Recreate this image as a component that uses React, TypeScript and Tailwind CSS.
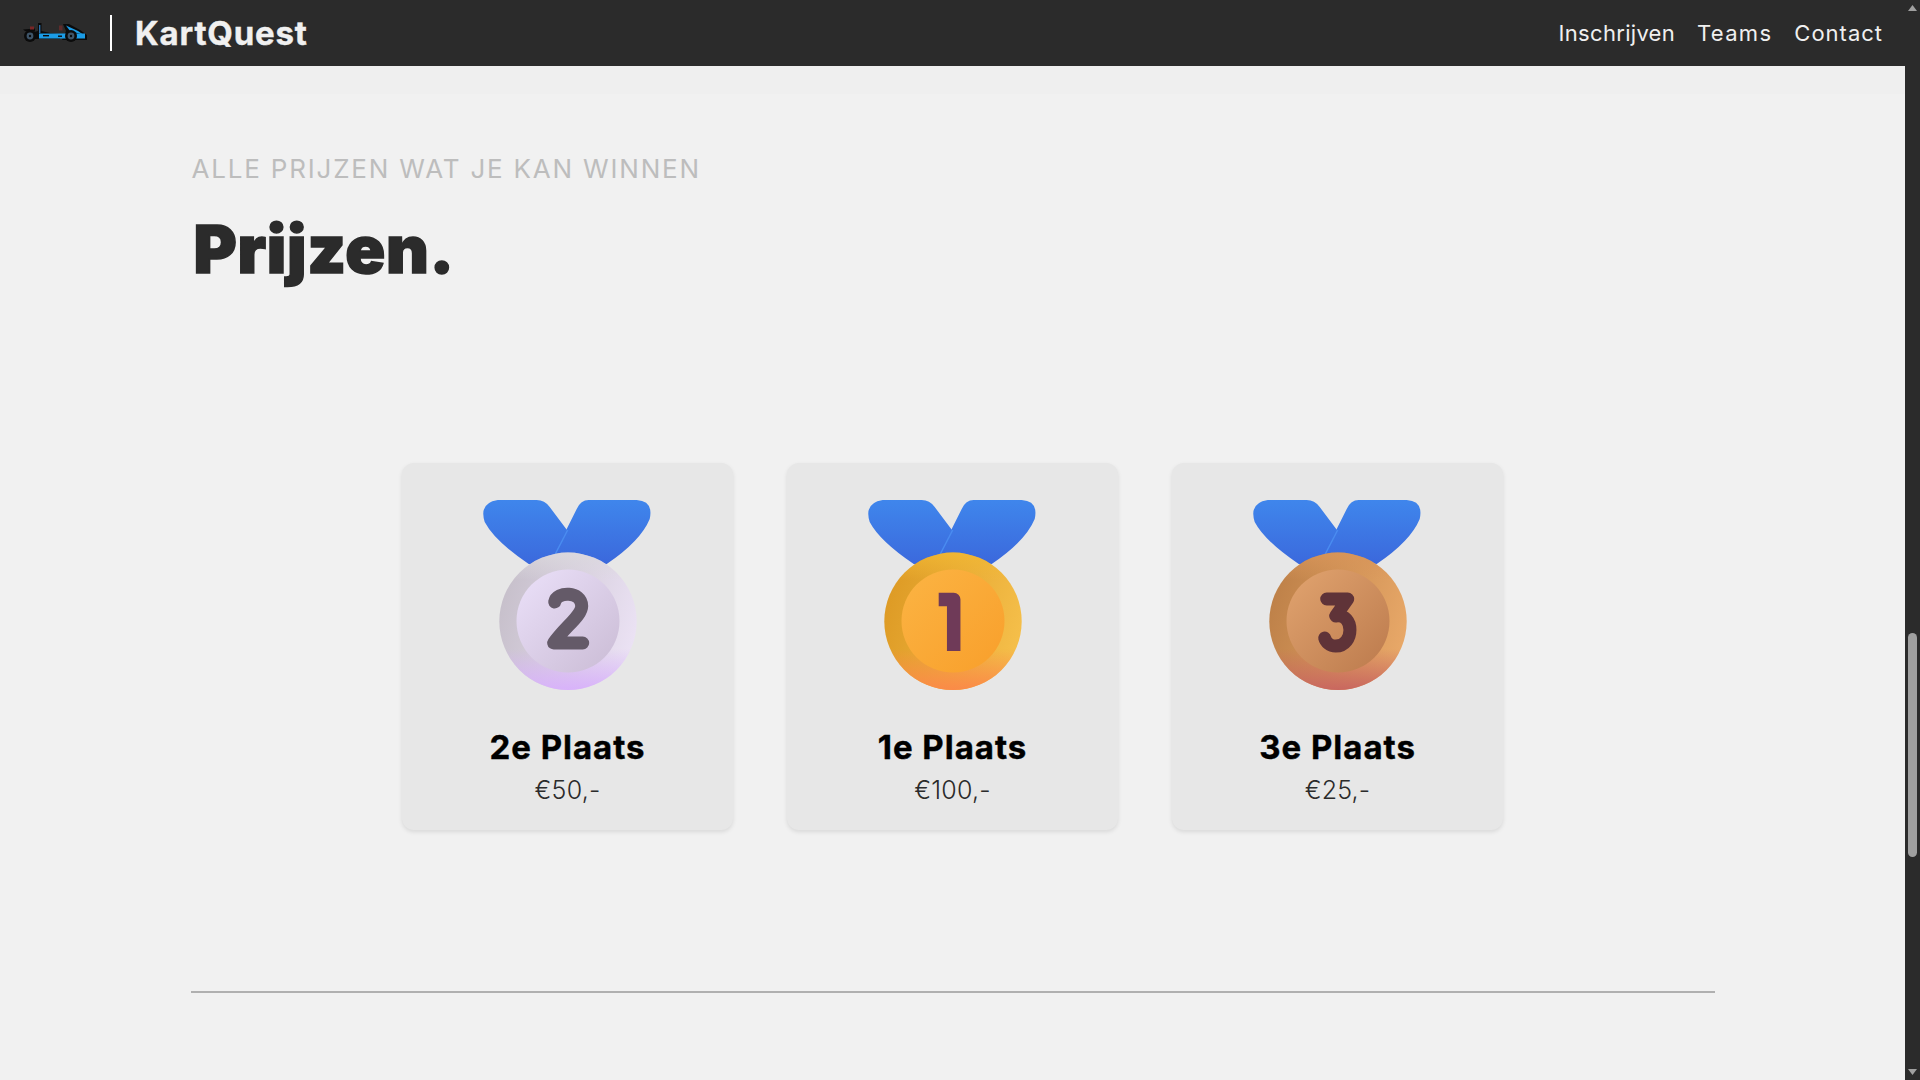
import React from "react";

type MedalProps = {
  id: string;
  rim: [string, string, string, string];
  face: [string, string];
  digit: string;
  digitColor: string;
  cap: "round" | "butt";
  width: number;
};

function Medal({ id, rim, face, digit, digitColor, cap, width }: MedalProps) {
  return (
    <svg viewBox="3.3 0 200 220" className="w-[200px] h-[220px] block" aria-hidden="true">
      <defs>
        <linearGradient id={`r-${id}`} x1="0" y1="0" x2="0" y2="1">
          <stop offset="0" stopColor="#3f86ec" />
          <stop offset="1" stopColor="#3b68dc" />
        </linearGradient>
        <linearGradient id={`m-${id}`} x1="0" y1="0.3" x2="1" y2="0.6">
          <stop offset="0" stopColor={rim[0]} />
          <stop offset="1" stopColor={rim[1]} />
        </linearGradient>
        <linearGradient id={`c-${id}`} x1="0" y1="0" x2="0" y2="1">
          <stop offset="0" stopColor={rim[3]} stopOpacity="0.8" />
          <stop offset="0.2" stopColor={rim[3]} stopOpacity="0" />
          <stop offset="0.7" stopColor={rim[2]} stopOpacity="0" />
          <stop offset="1" stopColor={rim[2]} stopOpacity="1" />
        </linearGradient>
        <linearGradient id={`f-${id}`} x1="0.1" y1="0.1" x2="0.9" y2="0.9">
          <stop offset="0" stopColor={face[0]} />
          <stop offset="1" stopColor={face[1]} />
        </linearGradient>
      </defs>
      <path d="M33 19 H72 Q80 19 85 26 L103 50 L90 86 L64 83 Q30 60 20 41 Q14 22 33 19 Z" fill={`url(#r-${id})`} />
      <path d="M124 19 H172 Q189 20 185 38 Q176 60 142 83 L88 76 L112 28 Q116 19 124 19 Z" fill={`url(#r-${id})`} />
      <path d="M103 49 L88 78" stroke="#4a8cf0" strokeWidth="1.5" fill="none" />
      <circle cx="103.3" cy="140.3" r="68.7" fill={`url(#m-${id})`} />
      <circle cx="103.3" cy="140.3" r="68.7" fill={`url(#c-${id})`} />
      <circle cx="103.3" cy="140" r="51.5" fill={`url(#f-${id})`} />
      <path d={digit} fill="none" stroke={digitColor} strokeWidth={width} strokeLinecap={cap} strokeLinejoin="round" />
    </svg>
  );
}

function KartLogo() {
  return (
    <svg viewBox="0 0 66 20" className="w-[66px] h-[20px] block" aria-hidden="true">
      <path d="M1 6.5 L13 5.5 L13 8.5 L3 8 Z" fill="#0b0b0b" />
      <rect x="8" y="3.5" width="4" height="3" fill="#7a2626" />
      <path d="M16 0 H19.5 V8 L28 10 L38 11 L38 16 H12 L12 9 L16 8 Z" fill="#0b0b0b" />
      <rect x="17" y="2" width="1.4" height="8" fill="#2b6ea8" />
      <path d="M41 1 L47 1 L58 7 L65 12 L65 17 H40 L44 8 Z" fill="#0b0b0b" />
      <path d="M44 2.5 L56 8 L61 11.5 L48 8 Z" fill="#1b9ce6" />
      <rect x="37" y="2.5" width="3.5" height="5" fill="#5e2b2b" />
      <path d="M17 10.5 H63 V15.5 H17 Z" fill="#1b9ce6" />
      <rect x="21" y="12" width="6" height="1.4" fill="#0b0b0b" />
      <rect x="36" y="12.5" width="4" height="1.4" fill="#0b0b0b" />
      <circle cx="8" cy="13" r="6" fill="#0b0b0b" />
      <circle cx="8" cy="13" r="3.4" fill="#3e5468" />
      <circle cx="8" cy="13" r="1.2" fill="#0b0b0b" />
      <circle cx="49" cy="13" r="6" fill="#0b0b0b" />
      <circle cx="49" cy="13" r="3.4" fill="#3e5468" />
      <circle cx="49" cy="13" r="1.2" fill="#0b0b0b" />
    </svg>
  );
}

const cards = [
  {
    id: "s", title: "2e Plaats", price: "€50,-",
    rim: ["#c6bfca", "#ebe2f4", "#d8b2fa", "#dcdade"] as [string, string, string, string],
    face: ["#e8ddf6", "#cdbfd8"] as [string, string],
    digit: "M90 121 C92 110 117 110 117 125 C117 135 100 146 89 162 H118",
    digitColor: "#645a68", cap: "round" as const, width: 13,
  },
  {
    id: "g", title: "1e Plaats", price: "€100,-",
    rim: ["#dd9a24", "#f5bf4a", "#fb8a48", "#f2b934"] as [string, string, string, string],
    face: ["#fbb241", "#f9a12d"] as [string, string],
    digit: "M89 118.5 H104 V170",
    digitColor: "#6f3a58", cap: "butt" as const, width: 13.5,
  },
  {
    id: "b", title: "3e Plaats", price: "€25,-",
    rim: ["#bd8048", "#e8a868", "#c9675f", "#d9965a"] as [string, string, string, string],
    face: ["#dea06c", "#bf7e50"] as [string, string],
    digit: "M92 118 H113 L101 135 C120 132 120 165 101 165 C95 165 91 161 90 157",
    digitColor: "#5f3338", cap: "round" as const, width: 13,
  },
];

export default function App() {
  return (
    <div className="flex h-screen w-full overflow-hidden bg-[#f1f1f1] font-['Inter','Liberation_Sans',sans-serif]">
      <div className="flex flex-1 min-w-0 flex-col">
        <header className="flex h-[66px] shrink-0 items-center bg-[#2b2b2b]">
          <div className="ml-[22px] w-[66px]"><KartLogo /></div>
          <div className="ml-[22px] h-[36px] w-[2px] bg-white" />
          <span className="ml-[23px] text-[33px] font-bold leading-none tracking-[0.8px] text-[#f0f0f0] [-webkit-text-stroke:0.4px_#f0f0f0]">KartQuest</span>
          <nav className="ml-auto mr-[22px] flex gap-[22px] text-[22px] font-normal text-[#f0f0f0]">
            <a className="tracking-[0.3px]">Inschrijven</a>
            <a className="tracking-[1.3px]">Teams</a>
            <a className="tracking-[1px]">Contact</a>
          </nav>
        </header>

        <main className="flex flex-1 flex-col">
          <div className="h-[28px] bg-[#efefef]" />
          <div className="mx-auto mt-[59px] w-[1524px] pl-[1px]">
            <p className="text-[26px] leading-[32px] tracking-[1.8px] font-normal text-[#bdbdbd]">ALLE PRIJZEN WAT JE KAN WINNEN</p>
            <h1 className="mt-[26px] ml-[2px] text-[66px] leading-[76px] font-black tracking-[0.7px] text-[#2b2b2b] [-webkit-text-stroke:1.5px_#2b2b2b]">Prijzen.</h1>
          </div>

          <div className="mt-[176px] flex justify-center gap-[54px]">
            {cards.map((c) => (
              <div key={c.id} className="flex h-[367px] w-[331px] flex-col items-center rounded-[12px] bg-[#e7e7e7] shadow-[0_2px_4px_rgba(0,0,0,0.1)]">
                <div className="mt-[18px]"><Medal {...c} /></div>
                <h2 className="mt-[26px] text-[33px] leading-[40px] font-bold tracking-[1px] text-black [-webkit-text-stroke:0.4px_#000]">{c.title}</h2>
                <p className="mt-[7px] text-[25px] leading-[32px] font-light tracking-[0.2px] text-[#2b2b2b]">{c.price}</p>
              </div>
            ))}
          </div>

          <div className="mx-auto mt-[161px] h-[2px] w-[1524px] bg-[#b0b0b0]" />
        </main>
      </div>

      <aside className="flex w-[15px] shrink-0 flex-col items-center bg-[#2b2b2b]">
        <svg viewBox="0 0 9 6" className="mt-[5px] h-[6px] w-[9px] block"><path d="M4.5 0 L9 6 H0 Z" fill="#a0a0a0" /></svg>
        <div className="mt-[622px] h-[224px] w-[9px] rounded-[5px] bg-[#a0a0a0]" />
        <svg viewBox="0 0 9 6" className="mt-auto mb-[5px] h-[6px] w-[9px] block"><path d="M0 0 H9 L4.5 6 Z" fill="#a0a0a0" /></svg>
      </aside>
    </div>
  );
}
